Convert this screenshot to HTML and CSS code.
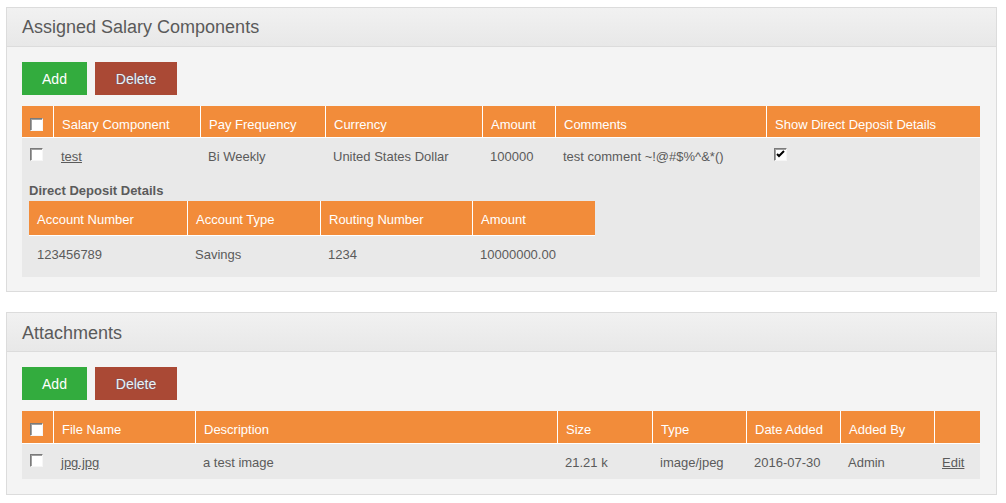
FILE: index.html
```html
<!DOCTYPE html>
<html>
<head>
<meta charset="utf-8">
<link rel="stylesheet" href="styles.css">
</head>
<body>
<div class="box box-first">
  <div class="head"><h1>Assigned Salary Components</h1></div>
  <div class="inner">
    <div class="actions">
      <button class="btn btn-add">Add</button>
      <button class="btn btn-delete">Delete</button>
    </div>
    <table class="grid">
      <thead>
        <tr>
          <th class="w31"><span class="cb cb-head"></span></th>
          <th class="w147">Salary Component</th>
          <th class="w125">Pay Frequency</th>
          <th class="w157">Currency</th>
          <th class="w73">Amount</th>
          <th class="w211">Comments</th>
          <th class="w214">Show Direct Deposit Details</th>
        </tr>
      </thead>
      <tbody>
        <tr class="data">
          <td><span class="cb"></span></td>
          <td><a href="#">test</a></td>
          <td>Bi Weekly</td>
          <td>United States Dollar</td>
          <td>100000</td>
          <td>test comment ~!@#$%^&amp;*()</td>
          <td><span class="cb cb-checked"><svg width="9" height="9" viewBox="0 0 9 9"><polyline points="1,4 3,6 8,1" fill="none" stroke="#000" stroke-width="2"/></svg></span></td>
        </tr>
        <tr class="sub">
          <td colspan="7" class="sub-cell">
            <h4>Direct Deposit Details</h4>
            <table class="grid subgrid">
              <thead>
                <tr>
                  <th class="w158">Account Number</th>
                  <th class="w133">Account Type</th>
                  <th class="w152">Routing Number</th>
                  <th class="w123">Amount</th>
                </tr>
              </thead>
              <tbody>
                <tr class="data">
                  <td>123456789</td>
                  <td>Savings</td>
                  <td>1234</td>
                  <td>10000000.00</td>
                </tr>
              </tbody>
            </table>
          </td>
        </tr>
      </tbody>
    </table>
  </div>
</div>

<div class="box box-second">
  <div class="head"><h1>Attachments</h1></div>
  <div class="inner">
    <div class="actions">
      <button class="btn btn-add">Add</button>
      <button class="btn btn-delete">Delete</button>
    </div>
    <table class="grid">
      <thead>
        <tr>
          <th class="w31"><span class="cb cb-head"></span></th>
          <th class="w142">File Name</th>
          <th class="w362">Description</th>
          <th class="w95">Size</th>
          <th class="w94">Type</th>
          <th class="w94">Date Added</th>
          <th class="w94">Added By</th>
          <th class="w46"></th>
        </tr>
      </thead>
      <tbody>
        <tr class="data data-att">
          <td><span class="cb"></span></td>
          <td><a href="#">jpg.jpg</a></td>
          <td>a test image</td>
          <td>21.21 k</td>
          <td>image/jpeg</td>
          <td>2016-07-30</td>
          <td>Admin</td>
          <td><a href="#">Edit</a></td>
        </tr>
      </tbody>
    </table>
  </div>
</div>
</body>
</html>
```
FILE: styles.css
```css
* { box-sizing: border-box; }

body {
  margin: 0;
  padding: 7px 0 0 6px;
  background: #fff;
  font-family: "Liberation Sans", Arial, sans-serif;
  font-size: 13px;
  color: #5b5b5b;
}

.box {
  width: 991px;
  border: 1px solid #dcdcdc;
  background: #f4f4f4;
}

.box-second { margin-top: 20px; }

.head {
  height: 39px;
  border-bottom: 1px solid #dcdcdc;
  background: linear-gradient(#f1f1f1, #e8e8e8);
  padding-left: 15px;
}

.head h1 {
  margin: 0;
  font-size: 18px;
  font-weight: normal;
  line-height: 38px;
  color: #5a5a5a;
}

.box-second .head h1 { line-height: 40px; }

.inner {
  padding: 15px 15px 14px 15px;
}

.box-second .inner { padding-bottom: 15px; }

.actions {
  display: flex;
  gap: 8px;
  margin-bottom: 11px;
}

.btn {
  height: 33px;
  border: 0;
  margin: 0;
  padding: 0;
  font-family: "Liberation Sans", Arial, sans-serif;
  font-size: 14px;
  color: #fff;
  cursor: pointer;
}

.btn-add {
  width: 65px;
  background: #33ac3e;
}

.btn-delete {
  width: 82px;
  background: #aa4935;
  color: #f0f0f0;
  text-shadow: 0 0 1px #5d6380, 0 0 1px #5d6380;
}

.grid {
  width: 958px;
  border-collapse: separate;
  border-spacing: 0;
  table-layout: fixed;
}

.grid th {
  background: #f28c3a;
  color: #fff;
  font-weight: normal;
  text-align: left;
  padding: 11px 8px 5px 8px;
  line-height: 15px;
  border-bottom: 1px solid #fff;
  border-left: 1px solid #fff;
  white-space: nowrap;
}

.grid th:first-child { border-left: 0; }

.grid td {
  background: #e9e9e9;
  text-align: left;
  line-height: 15px;
  padding: 11px 8px 9px 8px;
  vertical-align: top;
  white-space: nowrap;
}

.data-att td { padding: 11px 8px 9px 8px; }

.box-second .grid th { padding: 11px 8px 6px 8px; }

.grid a {
  color: #5b5b5b;
  text-decoration: underline;
}

.sub-cell {
  padding: 0 7px 6px 7px !important;
}

.sub-cell h4 {
  margin: 10px 0 3px 0;
  font-size: 13px;
  line-height: 15px;
  font-weight: bold;
  color: #5b5b5b;
}

.subgrid { width: 566px; }

.subgrid th { padding: 11px 8px 8px 8px; }

.subgrid td { padding: 11px 8px 9px 8px; }

.w31 { width: 31px; }
.w46 { width: 46px; }
.w73 { width: 73px; }
.w94 { width: 94px; }
.w95 { width: 95px; }
.w123 { width: 123px; }
.w125 { width: 125px; }
.w133 { width: 133px; }
.w142 { width: 142px; }
.w147 { width: 147px; }
.w152 { width: 152px; }
.w157 { width: 157px; }
.w158 { width: 158px; }
.w211 { width: 211px; }
.w214 { width: 214px; }
.w362 { width: 362px; }

.cb {
  display: block;
  width: 13px;
  height: 13px;
  background: #fff;
  border: 1px solid;
  border-color: #7a7a7a #f6f6f6 #f6f6f6 #7a7a7a;
  box-shadow: inset 1px 1px 0 #a0a0a0;
  margin-top: -1px;
}

.cb-head { margin-top: -1px; }

.cb-checked {
  position: relative;
}

.cb-checked svg {
  position: absolute;
  left: 1px;
  top: 1px;
}
```
